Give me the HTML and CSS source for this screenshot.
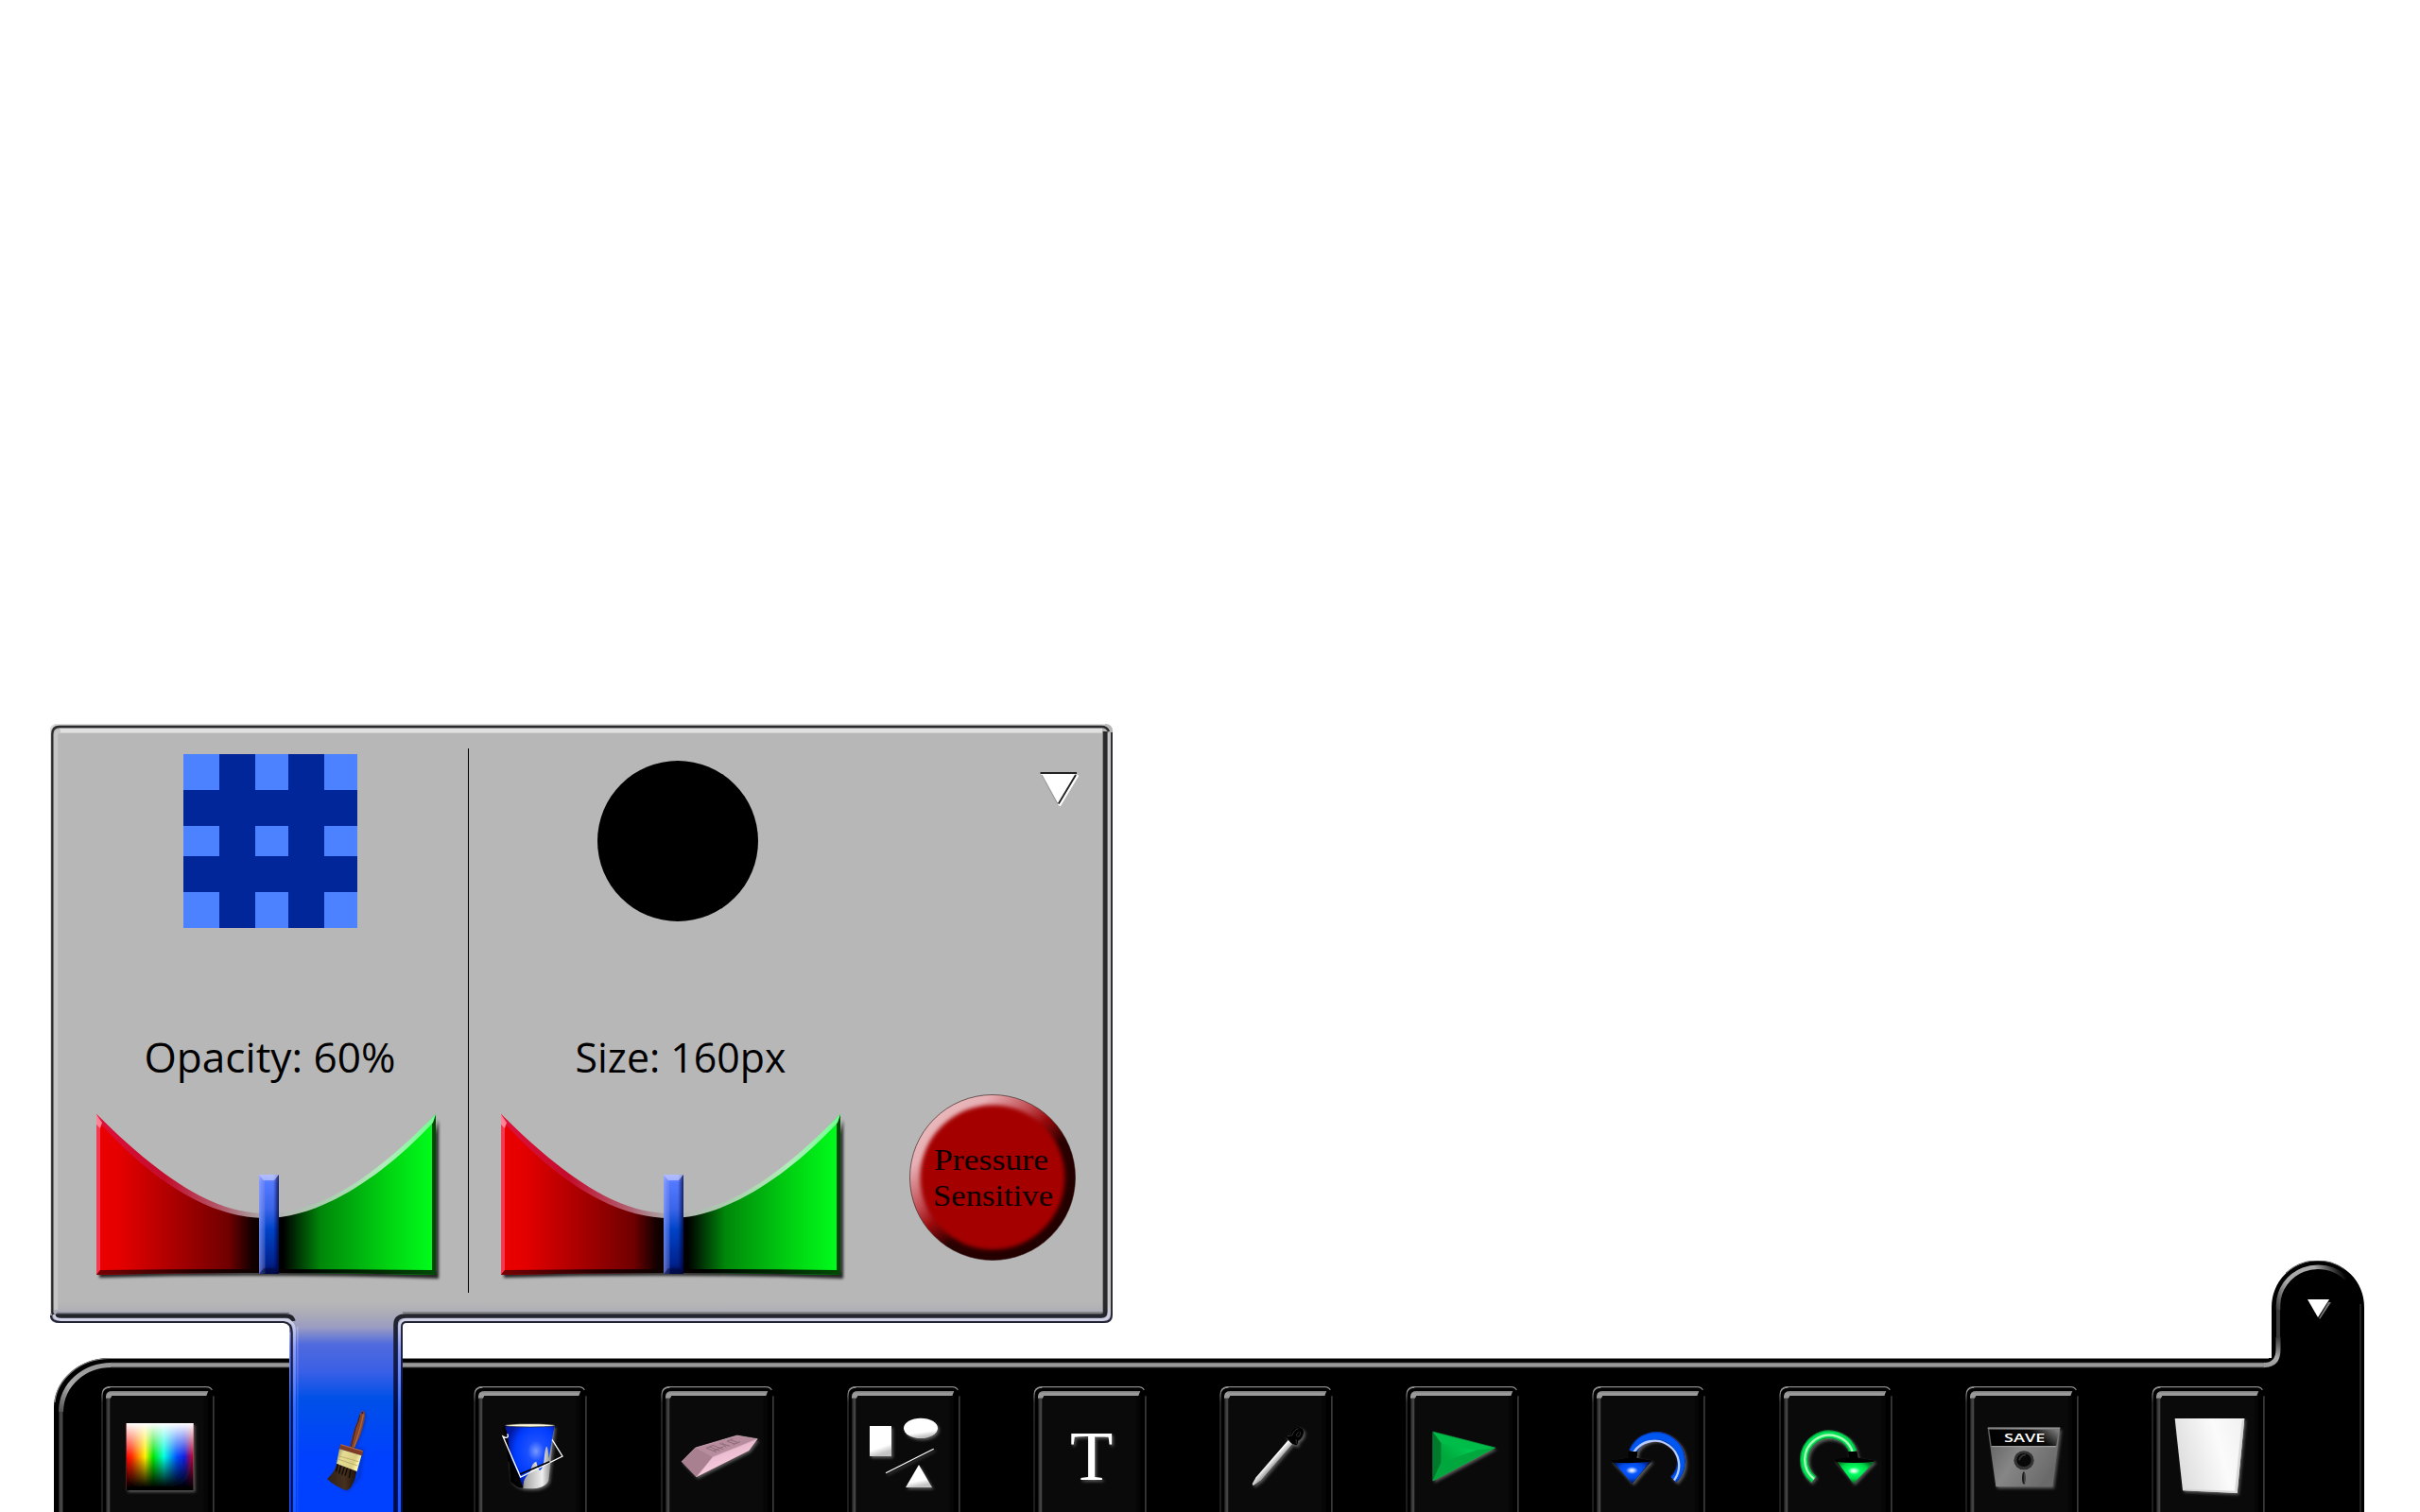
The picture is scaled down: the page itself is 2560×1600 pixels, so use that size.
FILE: index.html
```html
<!DOCTYPE html>
<html lang="en">
<head>
<meta charset="utf-8">
<title>Paint</title>
<link rel="stylesheet" href="styles.css">
</head>
<body>
<svg class="defs" width="0" height="0" aria-hidden="true">
  <defs>
    <linearGradient id="edgeL" x1="0" y1="0" x2="0" y2="1"><stop offset="0" stop-color="#aaa"/><stop offset=".12" stop-color="#333"/><stop offset="1" stop-color="#2a2a2a"/></linearGradient>
    <linearGradient id="bevelL" x1="0" y1="0" x2="1" y2="0"><stop offset="0" stop-color="#111"/><stop offset=".3" stop-color="#333"/><stop offset=".7" stop-color="#4a4a4a"/><stop offset="1" stop-color="#222"/></linearGradient>
    <linearGradient id="bevelT" x1="0" y1="0" x2="0" y2="1"><stop offset="0" stop-color="#777"/><stop offset=".3" stop-color="#9a9a9a"/><stop offset=".8" stop-color="#999"/><stop offset="1" stop-color="#444"/></linearGradient>
    <filter id="glow" x="-30%" y="-30%" width="160%" height="160%"><feDropShadow dx="5" dy="6" stdDeviation="5" flood-color="#999" flood-opacity=".55"/></filter>
    <filter id="soft" x="-30%" y="-30%" width="160%" height="160%"><feGaussianBlur stdDeviation="4"/></filter>
    <filter id="soft1" x="-30%" y="-30%" width="160%" height="160%"><feGaussianBlur stdDeviation="1.4"/></filter>
    <filter id="soft2" x="-30%" y="-30%" width="160%" height="160%"><feGaussianBlur stdDeviation="2"/></filter>
    <symbol id="frame" viewBox="0 0 360 399">
      <rect x="30" y="29" width="308" height="370" fill="#0a0a0a"/>
      <rect x="326" y="29" width="12" height="370" fill="#060606"/>
      <path d="M3 399V28Q3 3 28 3" fill="none" stroke="url(#edgeL)" stroke-width="4"/>
      <path d="M8 12Q14 2 30 2H334Q348 3 352 12" fill="none" stroke="#888" stroke-width="3.5"/>
      <rect x="15" y="34" width="14" height="365" fill="url(#bevelL)"/>
      <path d="M15 40V32Q16 15 34 15H340L334 30H34L29 40Z" fill="url(#bevelT)"/>
      <path d="M354 30H360V399H354Z" fill="#262626"/><path d="M356 34V399" stroke="#4a4a4a" stroke-width="2"/>
    </symbol>
    <linearGradient id="red" x1="0" x2="1"><stop offset="0" stop-color="#ec0000"/><stop offset=".07" stop-color="#e40000"/><stop offset=".39" stop-color="#700000"/><stop offset=".46" stop-color="#100"/><stop offset=".55" stop-color="#000"/><stop offset=".66" stop-color="#00870a"/><stop offset=".86" stop-color="#00d412"/><stop offset="1" stop-color="#00ff1c"/></linearGradient>
    <linearGradient id="rim" x1="0" x2="1"><stop offset="0" stop-color="#e0103a"/><stop offset=".2" stop-color="#c40c2c"/><stop offset=".38" stop-color="#b06070"/><stop offset=".48" stop-color="#a8a2a2"/><stop offset=".56" stop-color="#b2b8b2"/><stop offset=".68" stop-color="#a9d0ad"/><stop offset=".85" stop-color="#b0ecba"/><stop offset="1" stop-color="#70ff90"/></linearGradient>
    <linearGradient id="base" x1="0" x2="1"><stop offset="0" stop-color="#700"/><stop offset=".3" stop-color="#200"/><stop offset=".6" stop-color="#000"/><stop offset="1" stop-color="#004a05"/></linearGradient>
    <linearGradient id="knob" x1="0" y1="0" x2="0" y2="1"><stop offset="0" stop-color="#8fa2ff"/><stop offset=".08" stop-color="#5379ff"/><stop offset=".35" stop-color="#3a64e8"/><stop offset=".55" stop-color="#0043c8"/><stop offset=".9" stop-color="#00218c"/><stop offset="1" stop-color="#000a50"/></linearGradient>
    <linearGradient id="knobSide" x1="0" x2="1"><stop offset="0" stop-color="#aab4ff" stop-opacity=".6"/><stop offset=".28" stop-color="#8090f0" stop-opacity=".35"/><stop offset=".36" stop-color="#06f" stop-opacity="0"/><stop offset=".72" stop-color="#003" stop-opacity="0"/><stop offset="1" stop-color="#003" stop-opacity=".75"/></linearGradient>
    <symbol id="slider" viewBox="97 1170 374 190">
      <path d="M106 1185Q150 1237 194 1266Q150 1246 106 1190ZM105 1352Q281 1347 464 1353V1185L460 1200V1346H105Z" fill="#000" opacity=".8" filter="url(#soft1)"/>
      <path d="M102 1179C170 1249 225 1288 281 1288C340 1288 396 1248 461 1179V1349Q281 1345 102 1349Z" fill="url(#red)"/>
      <path d="M102 1179V1349L106 1344V1187Z" fill="#f23a52"/>
      <path d="M102 1349L106 1344Q281 1342 457 1344V1189L461 1179V1349Q281 1345 102 1349Z" fill="url(#base)"/>
      <path d="M102 1179C170 1246 225 1284 281 1284C340 1284 396 1245 461 1179L458 1188C400 1250 335 1289 281 1289C225 1289 166 1254 106 1189Z" fill="url(#rim)"/>
      <path d="M102 1179L108 1188L106 1194L102 1190Z" fill="#ff9aa8" opacity=".8"/>
      <path d="M274 1243H295V1348H274Z" fill="url(#knob)"/><path d="M274 1243H295V1348H274Z" fill="url(#knobSide)"/>
      <path d="M274 1243H295L290 1249H279Z" fill="#c2c8ff" opacity=".7"/><path d="M274 1348L279 1342H290L295 1348Z" fill="#00083c" opacity=".5"/>
    </symbol>
  </defs>
</svg>
<main class="stage">
  <svg class="dock" viewBox="57 1334 2444 266">
    <defs>
      <linearGradient id="cornerHi" gradientUnits="userSpaceOnUse" x1="64" y1="1500" x2="100" y2="1445"><stop offset="0" stop-color="#444"/><stop offset=".5" stop-color="#aaa"/><stop offset="1" stop-color="#999"/></linearGradient>
      <linearGradient id="domeHi" gradientUnits="userSpaceOnUse" x1="2408" y1="1390" x2="2482" y2="1352"><stop offset="0" stop-color="#333"/><stop offset=".3" stop-color="#aaa"/><stop offset=".7" stop-color="#aaa"/><stop offset="1" stop-color="#000"/></linearGradient>
      <linearGradient id="footHi" gradientUnits="userSpaceOnUse" x1="2396" y1="1446" x2="2410" y2="1415"><stop offset="0" stop-color="#999"/><stop offset=".4" stop-color="#aaa"/><stop offset="1" stop-color="#3a3a3a"/></linearGradient>
    </defs>
    <path d="M57 1600V1490C57 1460 84 1437 116 1437H2403V1383A49 49 0 0 1 2501 1383V1600Z"/>
    <path d="M58 1484C60 1460 84 1437.5 116 1437.5H2400" fill="none" stroke="#888" stroke-width="1.2"/>
    <path d="M64.5 1600V1492" stroke="#444" stroke-width="4" fill="none"/>
    <path d="M64.5 1494C65 1464 90 1444.5 118 1444.5" fill="none" stroke="url(#cornerHi)" stroke-width="5"/>
    <path d="M117 1444.5H2396" stroke="#5c5c5c" stroke-width="5.5" fill="none"/><path d="M117 1444.3H2396" stroke="#999" stroke-width="3.8" fill="none"/>
    <path d="M2395 1444.5Q2410 1444.5 2410 1428V1415" fill="none" stroke="url(#footHi)" stroke-width="5"/>
    <path d="M2410 1416V1383" stroke="#3a3a3a" stroke-width="4" fill="none"/>
    <path d="M2410 1386V1381A42 41 0 0 1 2482 1353" fill="none" stroke="url(#domeHi)" stroke-width="4.5"/>
    <path d="M2418 1347A49 49 0 0 1 2480 1343" fill="none" stroke="#666" stroke-width="1"/>
    <path d="M2497 1380V1600" stroke="#333" stroke-width="1.3"/>
    <path d="M2443 1377L2454 1396L2466 1378Z" fill="#777"/><path d="M2463 1376L2452.500 1394" stroke="#111" stroke-width="2"/>
    <path d="M2441 1375H2464L2452 1394Z" fill="#fff"/>
  </svg>

  <section class="panel">
    <svg class="panel-frame" viewBox="53 766 1124 834">
      <defs>
        <linearGradient id="body" gradientUnits="userSpaceOnUse" x1="0" y1="1378" x2="0" y2="1600"><stop offset="0" stop-color="#b7b7b7"/><stop offset=".06" stop-color="#aaaab8"/><stop offset=".12" stop-color="#9a9cc2"/><stop offset=".2" stop-color="#506ade"/><stop offset=".33" stop-color="#3a5fe6"/><stop offset=".46" stop-color="#0050e8"/><stop offset=".75" stop-color="#0040ff"/><stop offset="1" stop-color="#0040ff"/></linearGradient>
        <linearGradient id="light" gradientUnits="userSpaceOnUse" x1="0" y1="1380" x2="0" y2="1600"><stop offset="0" stop-color="#c8c8cc"/><stop offset=".08" stop-color="#d2d2ea"/><stop offset=".22" stop-color="#8f9cf0"/><stop offset=".5" stop-color="#3a6cf4"/><stop offset="1" stop-color="#1a55ff"/></linearGradient>
        <linearGradient id="dark" gradientUnits="userSpaceOnUse" x1="0" y1="1380" x2="0" y2="1500"><stop offset="0" stop-color="#2a2a2a"/><stop offset=".15" stop-color="#222430"/><stop offset=".6" stop-color="#10184c"/><stop offset="1" stop-color="#000c48"/></linearGradient>
      </defs>
      <path d="M61 766H1169Q1177 766 1177 774V1392Q1177 1400 1169 1400H426V1600H306V1400H61Q53 1400 53 1392V774Q53 766 61 766Z" fill="url(#body)"/>
      <g fill="none">
        <path d="M53.500 1390V775Q53.500 766.500 62 766.500H1169" stroke="#dcdcdc" stroke-width="1.500"/>
        <path d="M63 773.400H1166" stroke="#e0e0e0" stroke-width="5"/><path d="M63 775.500H1166" stroke="#cfcfcf" stroke-width="1"/>
        <path d="M59.200 1386V778Q59.200 773.500 64 773.500" stroke="#c6c6c6" stroke-width="4"/>
        <path d="M1173 774Q1171 769 1165 769H63Q55.300 769 55.300 777V1389Q56 1392 59 1392.500" stroke="#2a2a2c" stroke-width="2.300"/>
        <path d="M1167 774V1389H426" stroke="#777" stroke-width="1.500"/><path d="M60 1389.500H306" stroke="#777784" stroke-width="1.500"/>
        <path d="M1169.300 774V1388Q1169.300 1392.500 1165 1392.500H429Q418.500 1392.500 418.500 1402V1600" stroke="url(#dark)" stroke-width="4.600"/>
        <path d="M1173.300 776V1389Q1173.300 1396.500 1166 1396.500H431Q422.600 1396.500 422.600 1405V1600" stroke="url(#light)" stroke-width="2.800"/>
        <path d="M1176 775V1391Q1176 1399 1168 1399H430Q425 1399 425 1404V1600" stroke="url(#dark)" stroke-width="1.900"/>
        <path d="M59 1392.500H303Q309 1392.500 310.500 1398" stroke="#22242c" stroke-width="4.500"/>
        <path d="M314.800 1404V1600" stroke="url(#light)" stroke-width="1.200" opacity=".65"/>
        <path d="M57 1391Q58 1396.500 65 1396.500H299Q311.500 1396.500 311.500 1409V1600" stroke="url(#light)" stroke-width="2.800"/>
        <path d="M54 1392Q54 1399 64 1399H300Q308.600 1400 308.600 1410V1600" stroke="url(#dark)" stroke-width="2.200"/>
        <path d="M306.700 1410V1600" stroke="url(#light)" stroke-width="1"/>
      </g>
    </svg>
    <div class="panel-body">
      <div class="control control-opacity">
        <div class="swatch">
          <i class="on"></i><i></i><i class="on"></i><i></i><i class="on"></i>
          <i></i><i></i><i></i><i></i><i></i>
          <i class="on"></i><i></i><i class="on"></i><i></i><i class="on"></i>
          <i></i><i></i><i></i><i></i><i></i>
          <i class="on"></i><i></i><i class="on"></i><i></i><i class="on"></i>
        </div>
        <svg class="label" viewBox="53 1075 420 90"><text x="152.500" y="1134.500" textLength="266" lengthAdjust="spacingAndGlyphs">Opacity: 60%</text></svg>
        <svg class="slider"><use href="#slider"/></svg>
      </div>
      <div class="control control-size">
        <div class="tip"></div>
        <svg class="label" viewBox="495 1075 420 90"><text x="608.500" y="1134.500" textLength="223" lengthAdjust="spacingAndGlyphs">Size: 160px</text></svg>
        <svg class="slider"><use href="#slider"/></svg>
      </div>
      <div class="side">
        <svg class="collapse" viewBox="1096 812 48 46">
          <path d="M1100.500 818H1138.500L1120 852Z" fill="#fff"/>
          <path d="M1102 820L1119 851" stroke="#999" stroke-width="1.200"/>
          <path d="M1140 820L1120.500 852.500" stroke="#fff" stroke-width="3"/>
          <path d="M1100.500 818H1139M1138 820L1119.800 850.500" stroke="#222" stroke-width="1.900"/>
        </svg>
        <svg class="pressure" viewBox="962 1158 176 176">
          <defs>
            <linearGradient id="shine" x1=".12" y1=".1" x2=".85" y2=".9"><stop offset="0" stop-color="#e9b9bc"/><stop offset=".16" stop-color="#e6b0b4"/><stop offset=".36" stop-color="#c04a50"/><stop offset=".47" stop-color="#9a0a0c"/><stop offset=".62" stop-color="#2a0000"/><stop offset="1" stop-color="#200000"/></linearGradient>
          </defs>
          <circle cx="1050" cy="1246" r="87.500" fill="url(#shine)" stroke="#301010" stroke-opacity=".6" stroke-width="1"/>
          <circle cx="1050" cy="1246" r="76.500" fill="#a40000" filter="url(#soft2)"/>
          <text x="988" y="1237.700" textLength="121" lengthAdjust="spacingAndGlyphs">Pressure</text>
          <text x="987" y="1275.700" textLength="127" lengthAdjust="spacingAndGlyphs">Sensitive</text>
        </svg>
      </div>
    </div>
  </section>

  <nav class="keys">
    <button class="key"><svg class="face"><use href="#frame"/></svg>
      <svg class="icon" viewBox="202 921 360 399">
        <defs>
          <linearGradient id="hue"><stop offset="0" stop-color="#f00"/><stop offset=".08" stop-color="#ff2a00"/><stop offset=".28" stop-color="#fff000"/><stop offset=".4" stop-color="#00e400"/><stop offset=".56" stop-color="#00ffe0"/><stop offset=".75" stop-color="#0050ff"/><stop offset=".86" stop-color="#1020e0"/><stop offset="1" stop-color="#d00020"/></linearGradient>
          <linearGradient id="tone" x1="0" y1="0" x2="0" y2="1"><stop offset="0" stop-color="#fff"/><stop offset=".5" stop-color="#fff" stop-opacity="0"/><stop offset=".5" stop-color="#000" stop-opacity="0"/><stop offset=".96" stop-color="#000"/></linearGradient>
        </defs>
        <g filter="url(#glow)"><rect x="282" y="1038" width="213" height="213" fill="url(#hue)"/><rect x="282" y="1038" width="213" height="213" fill="url(#tone)"/></g>
      </svg></button>
    <button class="key"><svg class="icon" viewBox="72 261 360 399">
        <defs>
          <linearGradient id="ferrule" x1="0" y1="0" x2="1" y2=".4"><stop offset="0" stop-color="#8c8450"/><stop offset=".3" stop-color="#e6dc94"/><stop offset=".8" stop-color="#d9cf84"/><stop offset="1" stop-color="#fff8b0"/></linearGradient>
          <linearGradient id="bristle" x1="0" x2="1"><stop offset="0" stop-color="#2e2118"/><stop offset=".6" stop-color="#46301f"/><stop offset="1" stop-color="#1c130c"/></linearGradient>
        </defs>
        <path d="M312 342Q322 345 317 365Q310 400 286 458L310 462L300 550L262 590L232 572" fill="none" stroke="#002a9c" stroke-width="8" opacity=".6" filter="url(#soft)"/>
        <path d="M304 345Q309 336 316 341Q320 350 316 368Q308 410 298 428L283 460L271 457Q276 420 289 386Q299 365 304 345Z" fill="#84442a"/>
        <path d="M313 350Q305 395 284 452" fill="none" stroke="#b0643c" stroke-width="4"/><path d="M302 352Q298 374 288 394L274 452" fill="none" stroke="#3b1a10" stroke-width="3"/>
        <circle cx="310" cy="345" r="3" fill="#1a1a70"/>
        <path d="M241 445Q270 456 313 466L309 482Q270 472 236 460Z" fill="#7e3c27"/><path d="M242 446L311 467" stroke="#b1694a" stroke-width="3"/>
        <path d="M229 504Q224 532 198 555Q225 580 258 591Q272 590 278 574Q290 552 292 525Z" fill="url(#bristle)"/>
        <path d="M237 460L307 481L293 531L228 506Z" fill="url(#ferrule)"/>
        <path d="M235 482L297 500M232 492L295 513" stroke="#a89e5c" stroke-width="2"/>
        <path d="M232 508L227 532M242 513L236 538M253 517L245 542M262 521L255 545M273 525L268 552" stroke="#0d0805" stroke-width="4"/>
      </svg></button>
    <button class="key"><svg class="face"><use href="#frame"/></svg>
      <svg class="icon" viewBox="183 111 360 399">
        <defs>
          <linearGradient id="pail" x1="0" x2="1"><stop offset="0" stop-color="#000"/><stop offset=".22" stop-color="#333"/><stop offset=".42" stop-color="#aaa"/><stop offset=".75" stop-color="#eee"/><stop offset="1" stop-color="#666"/></linearGradient>
          <radialGradient id="paint" cx=".62" cy=".42" r=".6"><stop offset="0" stop-color="#7898ff"/><stop offset=".28" stop-color="#1c50ff"/><stop offset=".7" stop-color="#003cff"/><stop offset="1" stop-color="#0018a0"/></radialGradient>
        </defs>
        <g filter="url(#glow)"><path d="M282 236L300 410Q320 436 360 436Q410 436 421 410L440 236Z" fill="url(#pail)"/></g>
        <path d="M286 238L297 350L300 412Q320 436 340 434Q340 420 342 404L332 395Z" fill="#000"/>
        <path d="M284 236L302 340L326 392L338 428Q342 402 362 384Q370 350 382 350Q388 378 394 378Q406 370 408 330Q416 270 422 340Q430 290 440 236Z" fill="url(#paint)"/>
        <path d="M278 240L286 262L295 350" stroke="#000" stroke-width="7" fill="none"/>
        <ellipse cx="362" cy="235" rx="79" ry="5" fill="#fff8d8" stroke="#222" stroke-width="2"/>
        <path d="M290 262Q296 274 284 274L276 270L332 399L465 333L432 280" fill="none" stroke="#fff" stroke-width="4"/>
        <path d="M330 390L424 350" stroke="#000" stroke-width="5"/>
      </svg></button>
    <button class="key"><svg class="face"><use href="#frame"/></svg>
      <svg class="icon" viewBox="778 111 360 399">
        <defs><linearGradient id="rubber" x1="0" y1="0" x2=".5" y2="1"><stop offset="0" stop-color="#d7a5ba"/><stop offset=".5" stop-color="#edbdd1"/><stop offset="1" stop-color="#ffd4e6"/></linearGradient></defs>
        <g filter="url(#glow)"><path d="M844 350L888 306L1020 267L1085 278L1058 315L891 399Z" fill="#a98594"/></g>
        <path d="M888 306L1020 267L1085 278L942 336Z" fill="#b78d9e"/>
        <path d="M942 336L1085 278L1058 315L891 399Z" fill="url(#rubber)"/>
        <path d="M844 350L888 306L942 336L891 399Z" fill="#a88090"/>
        <path d="M844 350L888 306L1020 267L1085 278L942 336L891 399" fill="none" stroke="#d9b4c3" stroke-width="1.500"/>
        <path d="M923 307L955 320M933 303L966 316M945 299L976 311M923 307L945 298M944 316L978 302M965 293L997 300M973 289L985 305M988 285L1012 294M998 281L1022 289M988 286L1006 278M1008 296L1030 287" stroke="#8d6a78" stroke-width="3" fill="none"/>
      </svg></button>
    <button class="key"><svg class="face"><use href="#frame"/></svg>
      <svg class="icon" viewBox="108 111 360 399">
        <defs><linearGradient id="chalk" x1="0" y1="0" x2=".25" y2="1"><stop offset="0" stop-color="#fff"/><stop offset=".78" stop-color="#fff"/><stop offset="1" stop-color="#c4c4c4"/></linearGradient></defs>
        <g filter="url(#glow)" fill="url(#chalk)"><rect x="180" y="237" width="69" height="96"/><ellipse cx="342" cy="244" rx="54" ry="32"/><path d="M336 360L378 432H294Z"/><path d="M231 386L383 310" stroke="#fff" stroke-width="3.500"/></g>
      </svg></button>
    <button class="key"><svg class="face"><use href="#frame"/></svg>
      <svg class="icon" viewBox="700 111 360 399"><g filter="url(#glow)"><text class="letter" x="817" y="408" textLength="136" lengthAdjust="spacingAndGlyphs">T</text></g></svg></button>
    <button class="key"><svg class="face"><use href="#frame"/></svg>
      <svg class="icon" viewBox="90 111 360 399">
        <defs><linearGradient id="glass" gradientUnits="userSpaceOnUse" x1="240" y1="340" x2="262" y2="360"><stop offset="0" stop-color="#888"/><stop offset=".45" stop-color="#fff"/><stop offset="1" stop-color="#aaa"/></linearGradient></defs>
        <g filter="url(#glow)"><path d="M308 282L322 293L222 409L197 427L194 421L206 400Z" fill="url(#glass)"/>
        <path d="M298 270L316 262Q318 242 340 239Q360 244 358 258Q355 278 341 284L337 299Q318 296 312 284Z" fill="#000"/></g>
        <path d="M304 270L321 266Q326 249 340 245M346 256Q348 270 338 271Q330 266 341 256M333 280L334 293" stroke="#333" stroke-width="3" fill="none"/>
      </svg></button>
    <button class="key"><svg class="face"><use href="#frame"/></svg>
      <svg class="icon" viewBox="682 111 360 399">
        <defs><linearGradient id="gem" x1="0" y1=".5" x2="1" y2="0"><stop offset="0" stop-color="#00a83c"/><stop offset="1" stop-color="#00d455"/></linearGradient></defs>
        <g filter="url(#glow)"><path d="M768 255L967 306L768 412Z" fill="#00bc48"/></g>
        <path d="M768 255L795 292V352L768 412Z" fill="#007a2c"/><path d="M768 412L795 352L904 314L967 306Z" fill="#00a63e"/><path d="M795 292L904 314L795 352Z" fill="url(#gem)"/><path d="M768 255L967 306" stroke="#00913a" stroke-width="2"/>
      </svg></button>
    <button class="key"><svg class="face"><use href="#frame"/></svg>
      <svg class="icon" viewBox="73 111 360 399">
        <defs><radialGradient id="coneB" cx=".5" cy=".4" r=".55"><stop offset="0" stop-color="#fff"/><stop offset=".12" stop-color="#b8ccff"/><stop offset=".3" stop-color="#0858ff"/><stop offset=".65" stop-color="#0048e0"/><stop offset="1" stop-color="#001c70"/></radialGradient></defs>
        <g filter="url(#glow)" fill="none"><path d="M203 318A80 80 0 1 1 332 407" stroke="#0037ae" stroke-width="27"/><path d="M134 347L188 338L192 318L218 320L216 338L264 347L201 420Z" fill="#000"/></g>
        <path d="M203 318A80 80 0 1 1 332 407" fill="none" stroke="#0057f0" stroke-width="20"/><path d="M206 320A78 78 0 1 1 334 409" fill="none" stroke="#b9ccff" stroke-width="7"/>
        <path d="M188 318H218L214 338L264 347Q200 360 132 347L188 338Z" fill="#000"/><path d="M142 353Q200 357 258 350L201 420Z" fill="url(#coneB)"/>
      </svg></button>
    <button class="key"><svg class="face"><use href="#frame"/></svg>
      <svg class="icon" viewBox="667 111 360 399">
        <defs><radialGradient id="coneG" cx=".45" cy=".42" r=".55"><stop offset="0" stop-color="#fff"/><stop offset=".12" stop-color="#b8ffd0"/><stop offset=".3" stop-color="#00ff60"/><stop offset=".65" stop-color="#00d848"/><stop offset="1" stop-color="#006c20"/></radialGradient></defs>
        <g filter="url(#glow)" fill="none"><path d="M902 318A80 80 0 1 0 777 407" stroke="#00903a" stroke-width="27"/><path d="M842 345L888 338L886 318H914L918 338L972 347L903 420Z" fill="#000"/></g>
        <path d="M902 318A80 80 0 1 0 777 407" fill="none" stroke="#00e055" stroke-width="20"/><path d="M900 318A78 78 0 1 0 778 405" fill="none" stroke="#a9ffb6" stroke-width="7"/>
        <path d="M886 318H914L918 338L972 347Q908 360 840 343L889 337Z" fill="#000"/><path d="M851 351Q908 357 970 350L903 420Z" fill="url(#coneG)"/>
      </svg></button>
    <button class="key"><svg class="face"><use href="#frame"/></svg>
      <svg class="icon" viewBox="58 441 360 399">
        <defs><linearGradient id="plate" x1="0" y1="0" x2="1" y2=".5"><stop offset="0" stop-color="#5a5a5a"/><stop offset=".5" stop-color="#868686"/><stop offset="1" stop-color="#6a6a6a"/></linearGradient><linearGradient id="tag" x1="0" y1=".3" x2="1" y2="0"><stop offset="0" stop-color="#000"/><stop offset=".6" stop-color="#0a0a0a"/><stop offset="1" stop-color="#888"/></linearGradient></defs>
        <g filter="url(#glow)"><path d="M129 573H359L335 760H155Z" fill="url(#plate)"/></g>
        <path d="M134 578H355L346 631H141Z" fill="url(#tag)"/><path d="M129 573H359M141 632H346" stroke="#aaa" stroke-width="3"/>
        <text class="save" x="181" y="618" textLength="130" lengthAdjust="spacingAndGlyphs">SAVE</text>
        <ellipse cx="244" cy="676" rx="32" ry="30" fill="#333"/><ellipse cx="244" cy="675" rx="23" ry="21" fill="#080808"/><path d="M229 676Q232 660 250 658" stroke="#333" stroke-width="5" fill="none"/>
        <ellipse cx="244" cy="732" rx="6" ry="20" fill="#1c1c1c"/><path d="M247 715V748" stroke="#999" stroke-width="2"/>
      </svg></button>
    <button class="key"><svg class="face"><use href="#frame"/></svg>
      <svg class="icon" viewBox="649 441 360 399">
        <defs><linearGradient id="paper" x1="0" y1=".6" x2="1" y2=".3"><stop offset="0" stop-color="#dcdcdc"/><stop offset=".65" stop-color="#fbfbfb"/><stop offset="1" stop-color="#f2f2f2"/></linearGradient></defs>
        <g filter="url(#glow)"><path d="M723 543H944L921 780L748 772Z" fill="url(#paper)"/></g>
        <path d="M944 543L921 780L748 772L758 767L913 773L936 550Z" fill="#ccc" opacity=".7"/>
      </svg></button>
  </nav>
</main>
</body>
</html>
```
FILE: styles.css
```css
* { box-sizing: border-box; }
body { margin: 0; background: #fff; overflow: hidden; }
.defs { display: block; height: 0; }
svg { display: block; }

.stage { display: grid; width: 2560px; height: 1600px; }
.stage > * { grid-area: 1 / 1; align-self: end; }

.dock { width: 2444px; height: 266px; margin-left: 57px; }

.panel { display: grid; width: 1124px; height: 834px; margin-left: 53px; }
.panel > * { grid-area: 1 / 1; }
.panel-frame { width: 1124px; height: 834px; }
.panel-body {
  display: grid;
  grid-template-columns: 443px 434px 1fr;
  height: 576px;
  margin-top: 26px;
}

.control { display: flex; flex-direction: column; }
.control-opacity { border-right: 1px solid #000; padding-top: 6px; }
.control-size { padding-top: 13px; }
.swatch {
  display: grid;
  grid-template-columns: 38px 38px 35px 38px 35px;
  grid-template-rows: 38px 38px 32px 38px 38px;
  margin-left: 141px;
  width: 184px;
  background: #00269a;
}
.swatch .on { background: #4c82ff; }
.tip { width: 170px; height: 170px; margin-left: 136px; border-radius: 50%; background: #000; }
.label { width: 420px; height: 90px; margin-top: 93px; }
.control-size .label { margin: 100px 0 0 -1px; }
.label text { font: 44px "Open Sans", "Noto Sans", sans-serif; }
.slider { width: 374px; height: 190px; margin: 5px 0 0 44px; }
.control-size .slider { margin-left: 29px; }

.side { display: flex; flex-direction: column; }
.collapse { width: 48px; height: 46px; margin: 20px 0 0 166px; }
.pressure { width: 176px; height: 176px; margin: 300px 0 0 32px; }
.pressure text { font: 32px "Liberation Serif", serif; fill: #0a0000; }

.keys {
  display: flex;
  justify-content: space-between;
  width: 2289px;
  height: 133px;
  margin-left: 107px;
}
.key { display: grid; width: 120px; height: 133px; padding: 0; border: 0; background: none; }
.key > * { grid-area: 1 / 1; }
.face, .icon { width: 120px; height: 133px; }
.letter { font: 222px "Liberation Serif", serif; fill: #fff; }
.save { font: 600 37px "Open Sans", sans-serif; fill: #fff; }
```
